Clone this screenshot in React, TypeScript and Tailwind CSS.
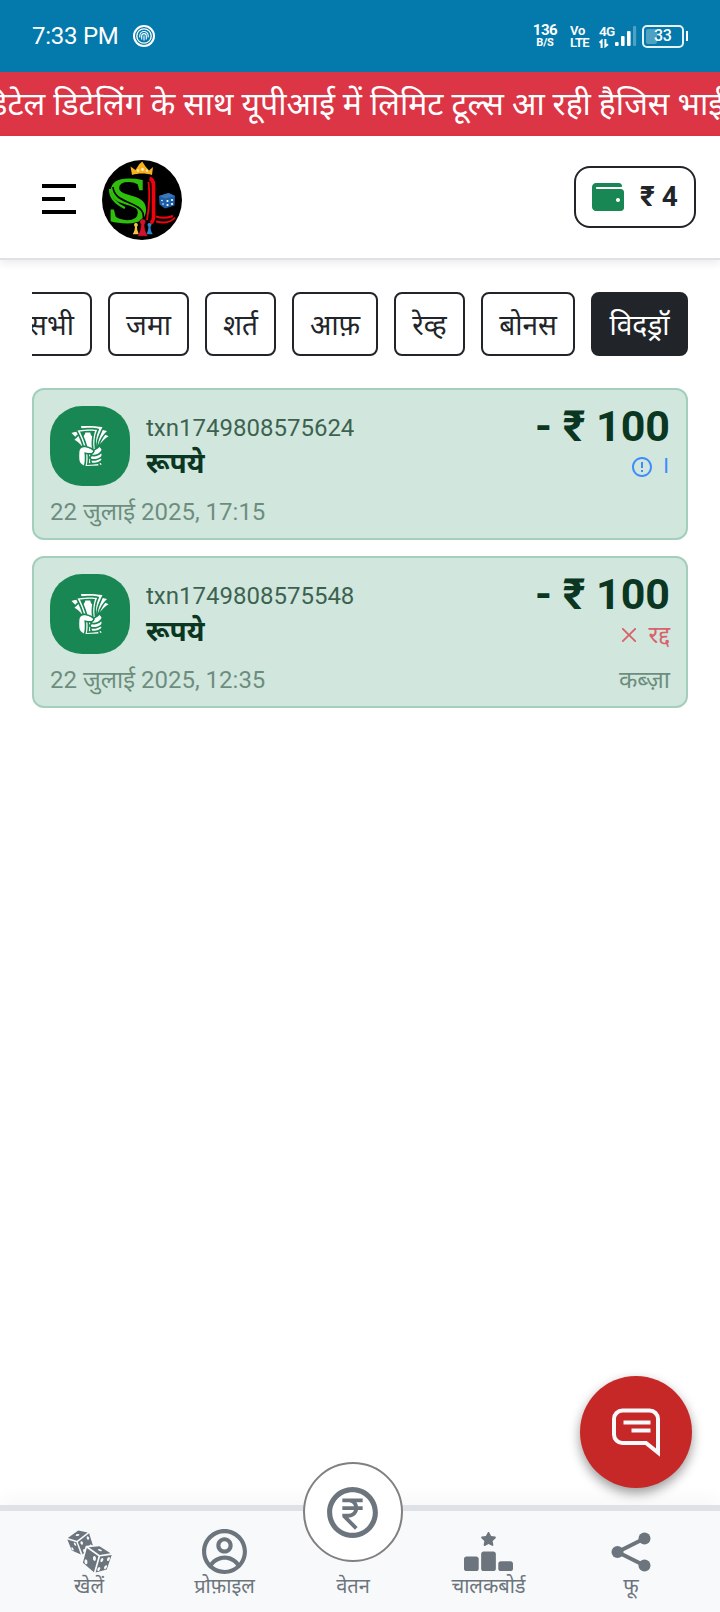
import type { ReactNode } from "react";
import { GiRollingDices, GiTakeMyMoney } from "react-icons/gi";
import { FaWallet } from "react-icons/fa";
import { FaRankingStar } from "react-icons/fa6";
import { RiMoneyRupeeCircleLine } from "react-icons/ri";
import { MdErrorOutline } from "react-icons/md";
import { RxCross2 } from "react-icons/rx";
import { CgProfile } from "react-icons/cg";

function FingerprintIcon() {
  return (
    <svg width="22" height="22" viewBox="0 0 22 22" fill="none" stroke="#fff">
      <circle cx="11" cy="11" r="10" strokeWidth="2" />
      <circle cx="11" cy="11" r="7.2" strokeWidth="1.3" />
      <path d="M6.8 12.5v-1.8a4.2 4.2 0 0 1 8.4 0v1.8M8.7 14.5v-3.6a2.3 2.3 0 0 1 4.6 0v3.6M11 10.5v5" strokeWidth="1.1" />
    </svg>
  );
}

function SignalIcon() {
  return (
    <svg width="22" height="22" viewBox="0 0 22 22" fill="#fff">
      <rect x="0" y="17" width="3.6" height="4" rx="1" />
      <rect x="6" y="11" width="3.6" height="10" rx="1" />
      <rect x="12" y="6" width="3.6" height="15" rx="1" />
      <rect x="18" y="1" width="3.2" height="20" rx="1" opacity="0.3" />
    </svg>
  );
}

function StatusBar() {
  return (
    <div className="flex h-[72px] items-center bg-[#0479ab] px-8 text-white">
      <span className="w-[101px] whitespace-nowrap text-[24px] leading-[74px] tracking-[-0.25px]">7:33 PM</span>
      <FingerprintIcon />
      <div className="ml-auto flex items-center">
        <div className="mr-[13px] flex w-[24px] flex-col items-center">
          <span className="text-[15px] font-bold leading-[13px] tracking-[-0.4px]">136</span>
          <span className="text-[11px] font-bold leading-[11px] tracking-[-0.2px]">B/S</span>
        </div>
        <div className="mr-[9px] flex w-[20px] flex-col pt-px font-semibold">
          <span className="text-[13px] leading-[12px] tracking-[-0.2px]">Vo</span>
          <span className="text-[13px] leading-[12px] tracking-[-0.6px]">LTE</span>
        </div>
        <div className="flex w-[16px] flex-col pt-px font-semibold">
          <span className="text-[13.5px] leading-[12px] tracking-[-0.6px]">4G</span>
          <svg width="10" height="10" viewBox="0 0 10 10" fill="none" stroke="#fff" strokeWidth="2" className="mt-[2px]">
            <path d="M0.6 3.800 2.600 1.800V9M6.400 0v7.200L9 5.200" />
          </svg>
        </div>
        <SignalIcon />
        <div className="ml-[5px] flex h-[23px] w-[42px] items-center rounded-[5px] border-2 border-white/90 p-[2px]">
          <div className="h-full w-[11px] rounded-[2px] bg-white/30" />
          <span className="ml-[-3px] text-[16px] font-medium leading-[18px] tracking-[-0.4px]">33</span>
        </div>
        <div className="ml-[2px] h-[10px] w-[2px] bg-white" />
      </div>
    </div>
  );
}

function Logo() {
  return (
    <svg width="80" height="80" viewBox="0 0 80 80" className="mt-[6px]">
      <circle cx="40" cy="40" r="40" fill="#000" />
      <path d="M30 15 28.500 6.500l5 3.500L37 4.500l3.200-3 3.300 5 3.500 4 4-3.500L50 15c-6-2-14-2-20 0Z" fill="#f9b01e" />
      <circle cx="36" cy="10.500" r="1.200" fill="#ffe9a8" />
      <circle cx="40.500" cy="9.500" r="1.400" fill="#fff2cc" />
      <circle cx="45" cy="10.800" r="1.200" fill="#ffe9a8" />
      <text transform="translate(4.500 62.800) scale(1.150 1)" fontFamily="Liberation Serif, serif" fontWeight="700" fontSize="67" fill="#2fbe0c">S</text>
      <path d="M11 27c1 11 11 13 19 17 9 4 13 8 11 17" fill="none" stroke="#000" strokeWidth="1.700" />
      <path d="M8 29c0 10 7 15 15 19" fill="none" stroke="#2fbe0c" strokeWidth="2.200" />
      <path d="M46.500 22c1.500 12 .5 26-1.500 38" fill="none" stroke="#f5000c" strokeWidth="1.800" />
      <path d="M47.500 18.500c4.500 1 4 6 4 10v28c0 4-.5 5.500-3 6.500" fill="none" stroke="#f5000c" strokeWidth="3.600" />
      <path d="M54 56.500c7 2.500 13 1 17-.5M54 61.500c8 2 15 1 19-4" fill="none" stroke="#f5000c" strokeWidth="1.900" />
      <path d="m57 36 9.500-3 6.500 3-.5 9.500L63 48.500l-5.500-4Z" fill="#1d5fa8" />
      <path d="m57 36 9.500-3 6.500 3-9.500 2.500Z" fill="#3b78b8" />
      <g fill="#fff">
        <circle cx="65.500" cy="41" r="1.100" />
        <circle cx="70" cy="40" r="1.100" />
        <circle cx="65.500" cy="45" r="1.100" />
        <circle cx="70" cy="44" r="1.100" />
        <circle cx="60" cy="40.500" r=".8" />
        <circle cx="61" cy="44" r=".8" />
      </g>
      <path d="M34 63a1.900 1.900 0 0 1 1 3.500c0 3 .5 5 2.200 7.700h-6.500c1.700-2.700 2.200-4.700 2.200-7.700A1.900 1.900 0 0 1 34 63Z" fill="#f8c24a" />
      <path d="M47.500 63a1.900 1.900 0 0 1 1 3.500c0 3 .5 5 2.200 7.700h-6.500c1.700-2.700 2.200-4.700 2.200-7.700a1.900 1.900 0 0 1 1.100-3.500Z" fill="#2d87cf" />
      <path d="M40.700 59a2.900 2.900 0 0 1 1.900 5.200c0 4.500.8 7.500 3.400 12H35.400c2.600-4.500 3.400-7.500 3.400-12A2.900 2.900 0 0 1 40.700 59Z" fill="#d5122e" stroke="#000" strokeWidth=".5" />
    </svg>
  );
}

function Header() {
  return (
    <header className="flex h-[124px] items-center border-b-2 border-[#dee2e6] bg-white pl-[42px] pr-6 shadow-[0_4px_8px_rgba(0,0,0,0.075)]">
      <div className="flex w-[60px] flex-col gap-[9px] pt-[3px]">
        <span className="h-[4px] w-[34px] bg-black" />
        <span className="h-[4px] w-[23px] bg-black" />
        <span className="h-[4px] w-[34px] bg-black" />
      </div>
      <Logo />
      <div className="ml-auto flex h-[62px] w-[122px] items-center rounded-[16px] border-2 border-[#212529] pl-4">
        <FaWallet size={32} className="text-[#198754]" />
        <span className="ml-4 whitespace-nowrap text-[28px] font-bold leading-none text-[#212529]">₹ 4</span>
      </div>
    </header>
  );
}

const tabs = [
  { label: "सभी", width: "w-[78px] pr-1" },
  { label: "जमा", width: "w-[81px]" },
  { label: "शर्त", width: "w-[71px]" },
  { label: "आफ़", width: "w-[86px]" },
  { label: "रेव्ह", width: "w-[71px]" },
  { label: "बोनस", width: "w-[94px]" },
  { label: "विदड्रॉ", width: "w-[97px]", active: true },
];

function Tabs() {
  return (
    <div className="mx-8 mt-8 flex justify-end gap-4 overflow-hidden">
      {tabs.map((t) => (
        <button
          key={t.label}
          className={`flex h-16 shrink-0 items-center justify-center whitespace-nowrap rounded-[8px] border-2 border-[#212529] pt-1 text-[28px] leading-[42px] ${t.width} ${t.active ? "bg-[#212529] text-white" : "bg-white text-[#212529]"}`}
        >
          {t.label}
        </button>
      ))}
    </div>
  );
}

interface TxnProps {
  id: string;
  date: string;
  status: ReactNode;
  note?: string;
}

function Transaction({ id, date, status, note }: TxnProps) {
  return (
    <div className="h-[152px] rounded-[12px] border-2 border-[#a3cfbb] bg-[#d1e7dd] p-4 text-[#0a3622]">
      <div className="flex h-20">
        <div className="flex size-20 items-center justify-center rounded-[32px] bg-[#198754] text-white">
          <GiTakeMyMoney size={46} />
        </div>
        <div className="ml-4 flex flex-col pt-1">
          <span className="text-[24px] leading-[36px] opacity-75">{id}</span>
          <span className="text-[28px] font-bold leading-[36px]">रूपये</span>
        </div>
        <div className="ml-auto flex flex-col items-end">
          <span className="text-[43px] font-bold leading-[41px]">- ₹ 100</span>
          {status}
        </div>
      </div>
      <div className="flex justify-between pt-2 text-[24px] leading-[36px]">
        <span className="opacity-50">{date}</span>
        <span className="opacity-50">{note}</span>
      </div>
    </div>
  );
}

function ShareIcon() {
  return (
    <svg width="40" height="48" viewBox="0 0 40 48" fill="currentColor">
      <path d="M33.500 10.500 6.500 24l27 13.500" fill="none" stroke="currentColor" strokeWidth="4" />
      <circle cx="33.500" cy="10.500" r="6" />
      <circle cx="6.500" cy="24" r="6" />
      <circle cx="33.500" cy="37.500" r="6" />
    </svg>
  );
}

function NavItem({ icon, label }: { icon?: ReactNode; label: string }) {
  return (
    <div className="flex flex-col items-center pt-4">
      <div className="flex h-[49px] items-center">{icon}</div>
      <span className="whitespace-nowrap text-[20px] leading-[20px]">{label}</span>
    </div>
  );
}

function BottomNav() {
  return (
    <nav className="relative grid h-[107px] grid-cols-[130px_141px_116px_155px_130px] border-t-[6px] border-[#dee2e6] bg-[#f8f9fa] px-6 text-[#6c757d] shadow-[0_-8px_16px_rgba(0,0,0,0.03)]">
      <NavItem icon={<GiRollingDices size={49} />} label="खेलें" />
      <NavItem icon={<CgProfile size={49} />} label="प्रोफ़ाइल" />
      <NavItem label="वेतन" />
      <NavItem icon={<FaRankingStar size={49} />} label="चालकबोर्ड" />
      <NavItem icon={<ShareIcon />} label="फू" />
      <div className="absolute left-[303px] top-[-49px] flex size-[100px] items-center justify-center rounded-full border-2 border-[#808080] bg-white pr-[2px]">
        <RiMoneyRupeeCircleLine size={61} />
      </div>
    </nav>
  );
}

function ChatButton() {
  return (
    <button className="absolute right-7 top-[1376px] flex size-28 items-center justify-center rounded-full bg-[#c62828] shadow-[0_5px_12px_rgba(0,0,0,0.4)]">
      <svg width="50" height="49" viewBox="0 0 50 49" fill="none" stroke="#f8f9fa" strokeWidth="4">
        <path d="M47 44.500V11a8.500 8.500 0 0 0-8.500-8.500h-27A8.500 8.500 0 0 0 3 11v15.500A8.500 8.500 0 0 0 11.500 35H35Z" />
        <path d="M12.500 14.500h27M20.500 22.500h19" />
      </svg>
    </button>
  );
}

export default function App() {
  return (
    <div className="relative flex h-[1612px] w-[720px] flex-col overflow-hidden bg-white font-['Roboto','Noto_Sans',sans-serif]">
      <StatusBar />
      <div className="flex h-16 items-center overflow-hidden bg-[#dc3545] text-[32px] leading-[48px] text-white">
        <span className="ml-[-18px] whitespace-nowrap">डिटेल डिटेलिंग के साथ यूपीआई में लिमिट टूल्स आ रही हैजिस भाई</span>
      </div>
      <Header />
      <Tabs />
      <main className="mx-8 mt-8 flex grow flex-col gap-4">
        <Transaction
          id="txn1749808575624"
          date="22 जुलाई 2025, 17:15"
          status={
            <span className="flex h-[42px] items-center gap-[9px] text-[#3d8bfd]">
              <MdErrorOutline size={24} />
              <span className="pr-[1px] text-[21px] leading-none">I</span>
            </span>
          }
        />
        <Transaction
          id="txn1749808575548"
          date="22 जुलाई 2025, 12:35"
          status={
            <span className="flex h-[42px] items-center gap-2 text-[#dc3545] opacity-75">
              <RxCross2 size={24} />
              <span className="text-[24px] leading-none">रद्द</span>
            </span>
          }
          note="कब्ज़ा"
        />
      </main>
      <BottomNav />
      <ChatButton />
    </div>
  );
}
